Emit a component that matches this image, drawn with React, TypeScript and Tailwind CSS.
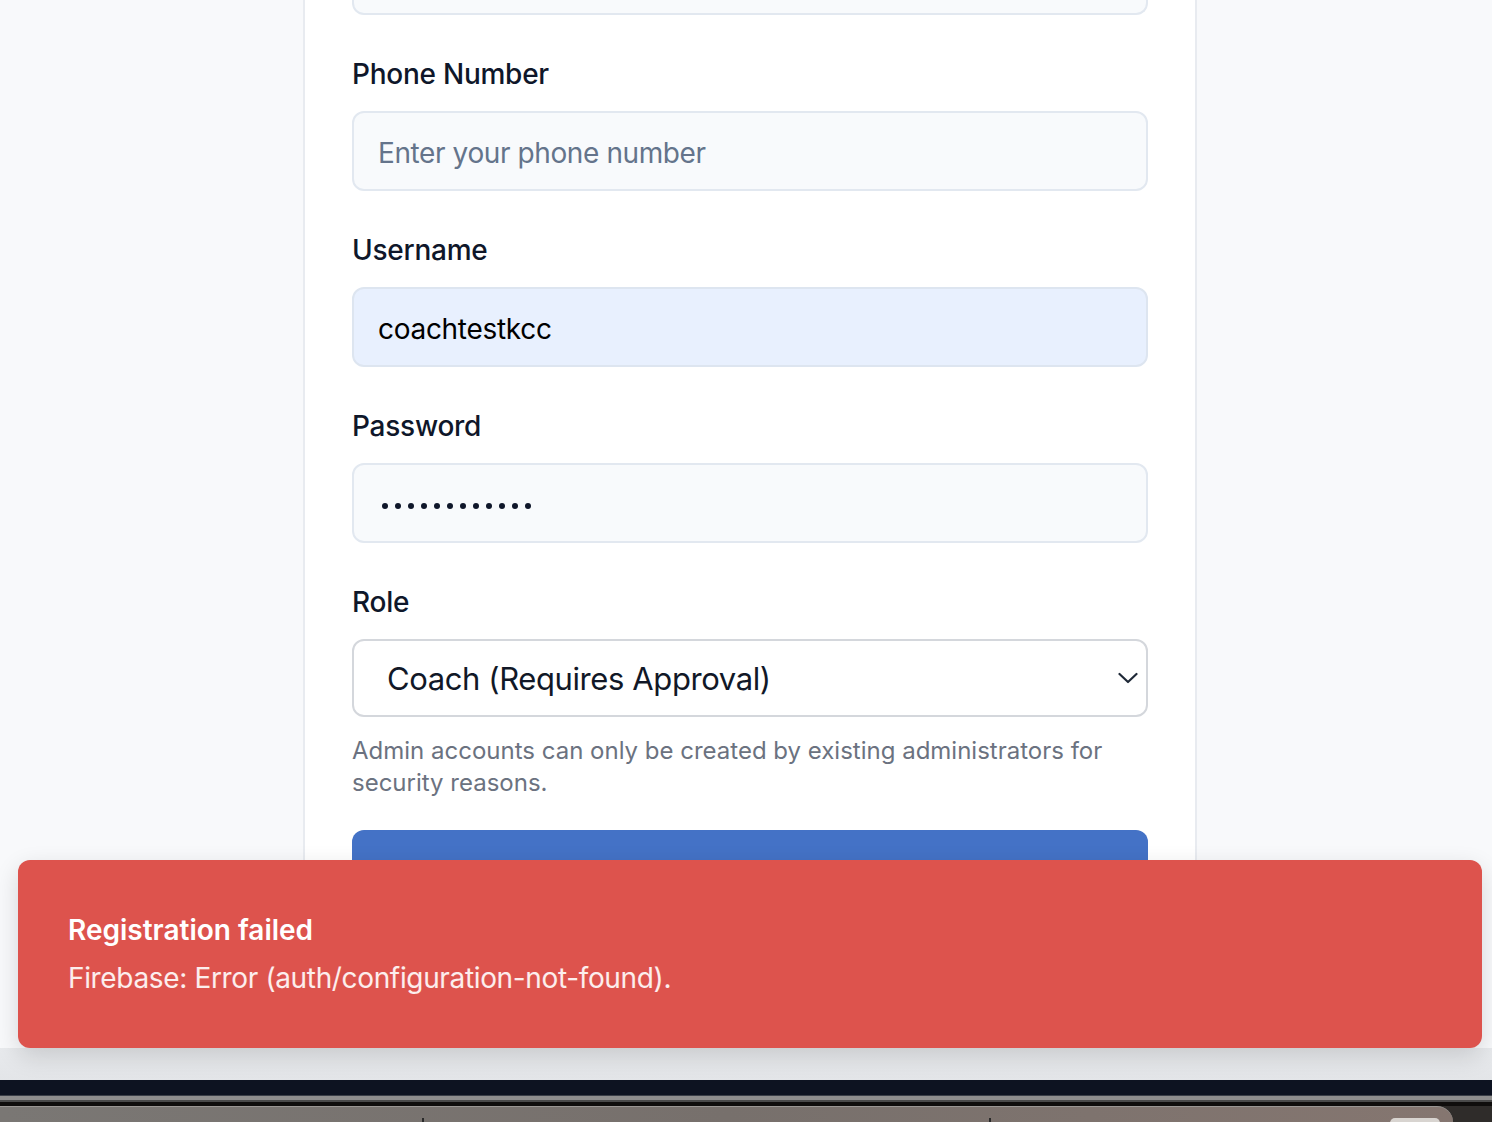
import React from 'react';

const font = { fontFamily: 'Inter, "Noto Sans", "Liberation Sans", sans-serif' };

function Label({ children }: { children: React.ReactNode }) {
  return <div className="text-[28px] leading-[40px] font-medium text-[#0f172a] tracking-[-0.25px] mb-[17px]">{children}</div>;
}

export default function App() {
  return (
    <div className="w-full h-[1122px] overflow-hidden flex flex-col" style={font}>
      <div className="h-[1080px] relative bg-[#f8f9fb] flex flex-col overflow-hidden">
        <div className="flex-1 flex justify-center pl-2 min-h-0">
          <div className="w-[894px] bg-white border-x-2 border-[#e8ebf0] px-[47px] flex flex-col">
            {/* previous field, scrolled mostly out of view */}
            <div className="h-[15px] bg-[#f8fafc] border-2 border-t-0 border-[#e2e8f0] rounded-b-xl" />

            <div className="mt-[39px]">
              <Label>Phone Number</Label>
              <div className="h-[80px] rounded-xl border-2 border-[#e2e8f0] bg-[#f8fafc] px-[24px] pt-[3px] flex items-center">
                <span className="text-[28px] text-[#64748b] tracking-[-0.4px]">Enter your phone number</span>
              </div>
            </div>

            <div className="mt-[39px]">
              <Label>Username</Label>
              <div className="h-[80px] rounded-xl border-2 border-[#dde5f0] bg-[#e8f0fe] px-[24px] pt-[3px] flex items-center">
                <span className="text-[28px] text-black tracking-[-0.3px]">coachtestkcc</span>
              </div>
            </div>

            <div className="mt-[39px]">
              <Label>Password</Label>
              <div className="h-[80px] rounded-xl border-2 border-[#e2e8f0] bg-[#f8fafc] pl-[28px] flex items-center gap-[7px] pt-[6px]">
                {Array.from({ length: 12 }).map((_, i) => (
                  <span key={i} className="w-[6px] h-[6px] rounded-full bg-[#0f172a]" />
                ))}
              </div>
            </div>

            <div className="mt-[39px]">
              <Label>Role</Label>
              <div className="h-[78px] rounded-xl border-2 border-[#d4d7dc] bg-white pl-[33px] pr-[6px] pt-[3px] flex items-center justify-between">
                <span className="text-[31px] text-[#111827] tracking-[-0.4px]">Coach (Requires Approval)</span>
                <svg width="20" height="12" viewBox="0 0 20 12" fill="none" className="mr-[2px] -mt-[3px]">
                  <path d="M1.5 2 L10 10 L18.5 2" stroke="#1f2937" strokeWidth="2.2" strokeLinecap="round" strokeLinejoin="round" />
                </svg>
              </div>
              <p className="mt-[18px] text-[24px] leading-[32px] text-[#6b7280]">
                Admin accounts can only be created by existing administrators for security reasons.
              </p>
            </div>

            <button className="mt-[31px] h-[80px] rounded-xl bg-[#4472c6] text-white text-[28px] font-semibold flex items-center justify-center pt-[14px]">
              Create Account
            </button>
          </div>
        </div>
        <div className="h-[32px] bg-gradient-to-b from-[#e8eaed] to-[#e3e5e8]" />

        {/* toast */}
        <div className="absolute left-[18px] top-[860px] right-[10px] h-[188px] rounded-xl bg-[#dd534d] px-[50px] pt-[50px] shadow-[0_8px_24px_rgba(0,0,0,0.14)]">
          <div className="text-[28px] leading-[40px] font-semibold text-white">Registration failed</div>
          <div className="mt-[8px] text-[28px] leading-[40px] text-white/90 tracking-[-0.35px]">Firebase: Error (auth/configuration-not-found).</div>
        </div>
      </div>

      <div className="h-[15px] bg-[#0d1321]" />
      <div className="h-[1px] bg-[#3a3f48]" />
      <div className="h-[4px] bg-[#8e8e8e]" />
      <div className="h-[2px] bg-[#4a4a4a]" />
      <div className="h-[4px] bg-[#0f0d0c]" />
      <div className="flex-1 flex bg-[#2f2c2a]">
        <div className="w-[1453px] rounded-tr-[16px] border-t border-[#9a9693] bg-gradient-to-r from-[#7a7774] via-[#77706c] to-[#857670] relative">
          <span className="absolute left-[422px] bottom-0 w-[2px] h-[4px] bg-[#2a2a2a]" />
          <span className="absolute left-[989px] bottom-0 w-[2px] h-[4px] bg-[#2a2a2a]" />
          <span className="absolute left-[1390px] bottom-[-6px] w-[50px] h-[10px] rounded-full bg-[#d8d4d0]" />
        </div>
      </div>
    </div>
  );
}
